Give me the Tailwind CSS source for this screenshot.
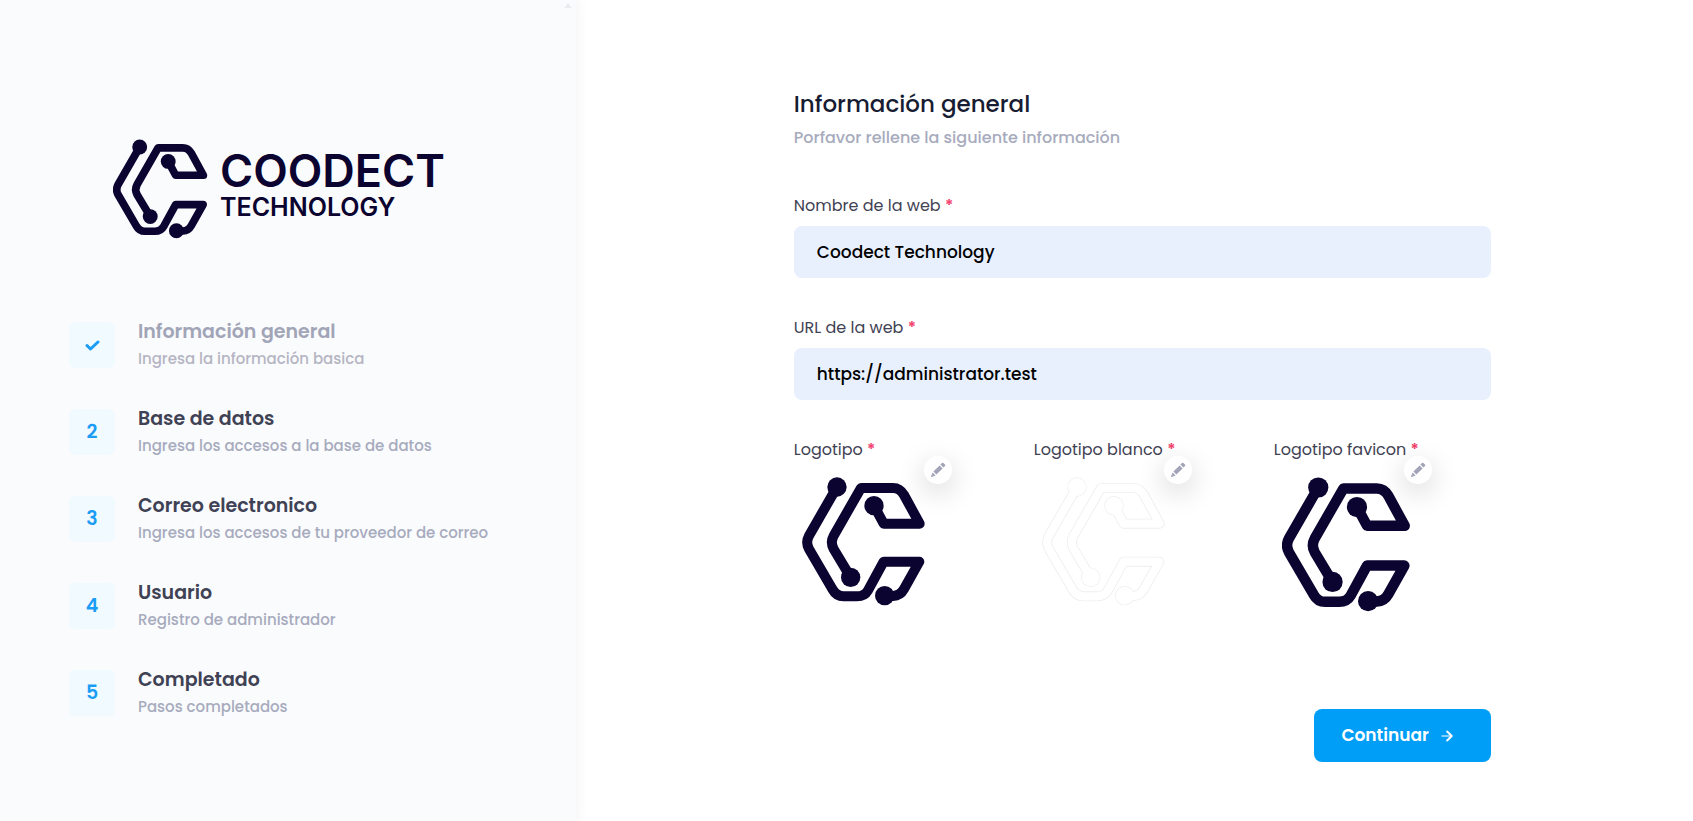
<!DOCTYPE html>
<html lang="es">
<head>
<meta charset="utf-8">
<meta name="viewport" content="width=device-width, initial-scale=1">
<title>Información general</title>
<script src="https://cdn.jsdelivr.net/npm/@tailwindcss/browser@4"></script>
</head>
<body class="bg-white font-['Poppins','Inter',sans-serif] text-[#3f4254]">
<svg class="hidden" aria-hidden="true">
  <symbol id="mark" viewBox="68 142 370 387">
    <g fill="none" stroke-width="30" stroke-linejoin="round" stroke="currentColor">
      <path d="M172 172 88 318Q77 338 88 358L158 478Q170 500 192 500H232Q255 500 265 482L312 396H419L373 478Q362 498 340 499H315"/>
      <path d="M283 228 312 282H420L373 196Q361 175 340 175H244L162 318Q151 338 162 358L213 443"/>
    </g>
    <g fill="currentColor"><circle cx="172" cy="172" r="29"/><circle cx="283" cy="228" r="29"/><circle cx="213" cy="443" r="29"/><circle cx="315" cy="498" r="29"/></g>
  </symbol>
  <symbol id="mark-inner" viewBox="68 142 370 387">
    <g fill="none" stroke-width="25" stroke-linejoin="round" stroke="currentColor">
      <path d="M172 172 88 318Q77 338 88 358L158 478Q170 500 192 500H232Q255 500 265 482L312 396H419L373 478Q362 498 340 499H315"/>
      <path d="M283 228 312 282H420L373 196Q361 175 340 175H244L162 318Q151 338 162 358L213 443"/>
    </g>
    <g fill="currentColor"><circle cx="172" cy="172" r="27"/><circle cx="283" cy="228" r="27"/><circle cx="213" cy="443" r="27"/><circle cx="315" cy="498" r="27"/></g>
  </symbol>
  <symbol id="pencil" viewBox="0 0 16 16">
    <path fill="currentColor" d="M.8 15.2 2.6 10.4 5.6 13.4ZM3.4 9.6 9.6 3.4 12.6 6.4 6.4 12.6ZM10.4 2.6 12 1Q12.7.3 13.4 1L15 2.6Q15.7 3.3 15 4L13.4 5.6Z"/>
  </symbol>
</svg>

<div class="flex min-h-screen">
  <aside class="relative w-[34%] shrink-0 bg-[#fafbfd] px-[69px] pt-[139px] pb-12 shadow-[0_0_12px_rgba(60,66,84,0.08)]">
    <span class="absolute top-[3px] right-1 h-0 w-0 border-x-4 border-b-[5px] border-x-transparent border-b-[#e9edf2]"></span>
    <div class="ml-11 flex items-center gap-3 text-[#0b0330]">
      <svg class="h-[100px] w-[95px] shrink-0" aria-hidden="true"><use href="#mark"/></svg>
      <div class="pb-1 font-['Inter',sans-serif] font-semibold whitespace-nowrap">
        <div class="text-[45px] leading-10">COODECT</div>
        <div class="text-[25px] leading-8">TECHNOLOGY</div>
      </div>
    </div>
    <ol class="mt-[83px] flex flex-col gap-[41px]">
      <li class="flex h-[46px] items-center gap-[23px]">
        <span class="flex size-[46px] shrink-0 items-center justify-center rounded-md bg-[#f1faff] text-[#1b9cf5]">
          <svg class="h-[11px] w-[15px]" viewBox="0 0 15 11" fill="none" stroke="currentColor" stroke-width="3" stroke-linecap="round" stroke-linejoin="round" aria-label="Completado"><path d="M2 5.5 5.5 9 13 2"/></svg>
        </span>
        <div>
          <h3 class="text-[19px] leading-7 font-semibold text-[#a1a5b7]">Información general</h3>
          <p class="text-[15px] leading-[26px] font-medium text-[#b5b5c3]">Ingresa la información basica</p>
        </div>
      </li>
      <li class="flex h-[46px] items-center gap-[23px]">
        <span class="flex size-[46px] shrink-0 items-center justify-center rounded-md bg-[#f1faff] text-[19px] font-semibold text-[#1b9cf5]">2</span>
        <div>
          <h3 class="text-[19px] leading-7 font-semibold">Base de datos</h3>
          <p class="text-[15px] leading-[26px] font-medium text-[#a7abbd]">Ingresa los accesos a la base de datos</p>
        </div>
      </li>
      <li class="flex h-[46px] items-center gap-[23px]">
        <span class="flex size-[46px] shrink-0 items-center justify-center rounded-md bg-[#f1faff] text-[19px] font-semibold text-[#1b9cf5]">3</span>
        <div>
          <h3 class="text-[19px] leading-7 font-semibold">Correo electronico</h3>
          <p class="text-[15px] leading-[26px] font-medium text-[#a7abbd]">Ingresa los accesos de tu proveedor de correo</p>
        </div>
      </li>
      <li class="flex h-[46px] items-center gap-[23px]">
        <span class="flex size-[46px] shrink-0 items-center justify-center rounded-md bg-[#f1faff] text-[19px] font-semibold text-[#1b9cf5]">4</span>
        <div>
          <h3 class="text-[19px] leading-7 font-semibold">Usuario</h3>
          <p class="text-[15px] leading-[26px] font-medium text-[#a7abbd]">Registro de administrador</p>
        </div>
      </li>
      <li class="flex h-[46px] items-center gap-[23px]">
        <span class="flex size-[46px] shrink-0 items-center justify-center rounded-md bg-[#f1faff] text-[19px] font-semibold text-[#1b9cf5]">5</span>
        <div>
          <h3 class="text-[19px] leading-7 font-semibold">Completado</h3>
          <p class="text-[15px] leading-[26px] font-medium text-[#a7abbd]">Pasos completados</p>
        </div>
      </li>
    </ol>
  </aside>

  <main class="flex flex-1 justify-center pt-[88px] pb-[60px] pl-4">
    <form class="w-full max-w-[697px]">
      <h1 class="text-[23px] leading-8 font-medium text-[#181c32]">Información general</h1>
      <p class="mt-1 text-[16px] leading-7 font-medium text-[#a7abbd]">Porfavor rellene la siguiente información</p>

      <label for="name" class="mt-[42px] block text-[16px] leading-6">Nombre de la web <span class="font-semibold text-[#f1416c]">*</span></label>
      <input id="name" type="text" value="Coodect Technology" class="mt-2 block h-[52px] w-full rounded-lg bg-[#e8f0fe] px-[23px] text-[17px] font-medium text-black outline-none">

      <label for="url" class="mt-[38px] block text-[16px] leading-6">URL de la web <span class="font-semibold text-[#f1416c]">*</span></label>
      <input id="url" type="text" value="https://administrator.test" class="mt-2 block h-[52px] w-full rounded-lg bg-[#e8f0fe] px-[23px] text-[17px] font-medium text-black outline-none">

      <div class="mt-[38px] grid grid-cols-3 gap-[23px]">
        <div>
          <div class="text-[16px] leading-6">Logotipo <span class="font-semibold text-[#f1416c]">*</span></div>
          <div class="relative mt-2 size-36 pt-[7px] pl-[8px] text-[#0b0330]">
            <svg class="h-[129px] w-[124px]" aria-hidden="true"><use href="#mark"/></svg>
            <button type="button" aria-label="Cambiar logotipo" class="absolute -top-3.5 -right-3.5 flex size-7 items-center justify-center rounded-full bg-white text-[#a1a5b7] shadow-[0_8px_28px_rgba(0,0,0,0.18)]"><svg class="size-4" aria-hidden="true"><use href="#pencil"/></svg></button>
          </div>
        </div>
        <div>
          <div class="text-[16px] leading-6">Logotipo blanco <span class="font-semibold text-[#f1416c]">*</span></div>
          <div class="relative mt-2 size-36 pt-[7px] pl-[8px]">
            <div class="grid h-[129px] w-[124px]">
              <svg class="col-start-1 row-start-1 h-full w-full text-[#eeeeee]" aria-hidden="true"><use href="#mark"/></svg>
              <svg class="col-start-1 row-start-1 h-full w-full text-white" aria-hidden="true"><use href="#mark-inner"/></svg>
            </div>
            <button type="button" aria-label="Cambiar logotipo blanco" class="absolute -top-3.5 -right-3.5 flex size-7 items-center justify-center rounded-full bg-white text-[#a1a5b7] shadow-[0_8px_28px_rgba(0,0,0,0.18)]"><svg class="size-4" aria-hidden="true"><use href="#pencil"/></svg></button>
          </div>
        </div>
        <div>
          <div class="text-[16px] leading-6">Logotipo favicon <span class="font-semibold text-[#f1416c]">*</span></div>
          <div class="relative mt-2 size-36 pt-[7px] pl-[8px] text-[#0b0330]">
            <svg class="h-[135px] w-[129px]" aria-hidden="true"><use href="#mark"/></svg>
            <button type="button" aria-label="Cambiar favicon" class="absolute -top-3.5 -right-3.5 flex size-7 items-center justify-center rounded-full bg-white text-[#a1a5b7] shadow-[0_8px_28px_rgba(0,0,0,0.18)]"><svg class="size-4" aria-hidden="true"><use href="#pencil"/></svg></button>
          </div>
        </div>
      </div>

      <div class="mt-[95px] flex justify-end">
        <button type="submit" class="flex h-[53px] items-center gap-3 rounded-lg bg-[#009ef7] pr-[38px] pl-[27px] text-[17px] font-semibold text-white">Continuar
          <svg class="size-3" viewBox="0 0 12 12" fill="none" stroke="currentColor" stroke-linecap="round" stroke-linejoin="round" aria-hidden="true"><path stroke-width="1.5" opacity=".7" d="M1 6H10"/><path stroke-width="2" d="M6.2 1.5 10.7 6 6.2 10.5"/></svg>
        </button>
      </div>
    </form>
  </main>
</div>
</body>
</html>
